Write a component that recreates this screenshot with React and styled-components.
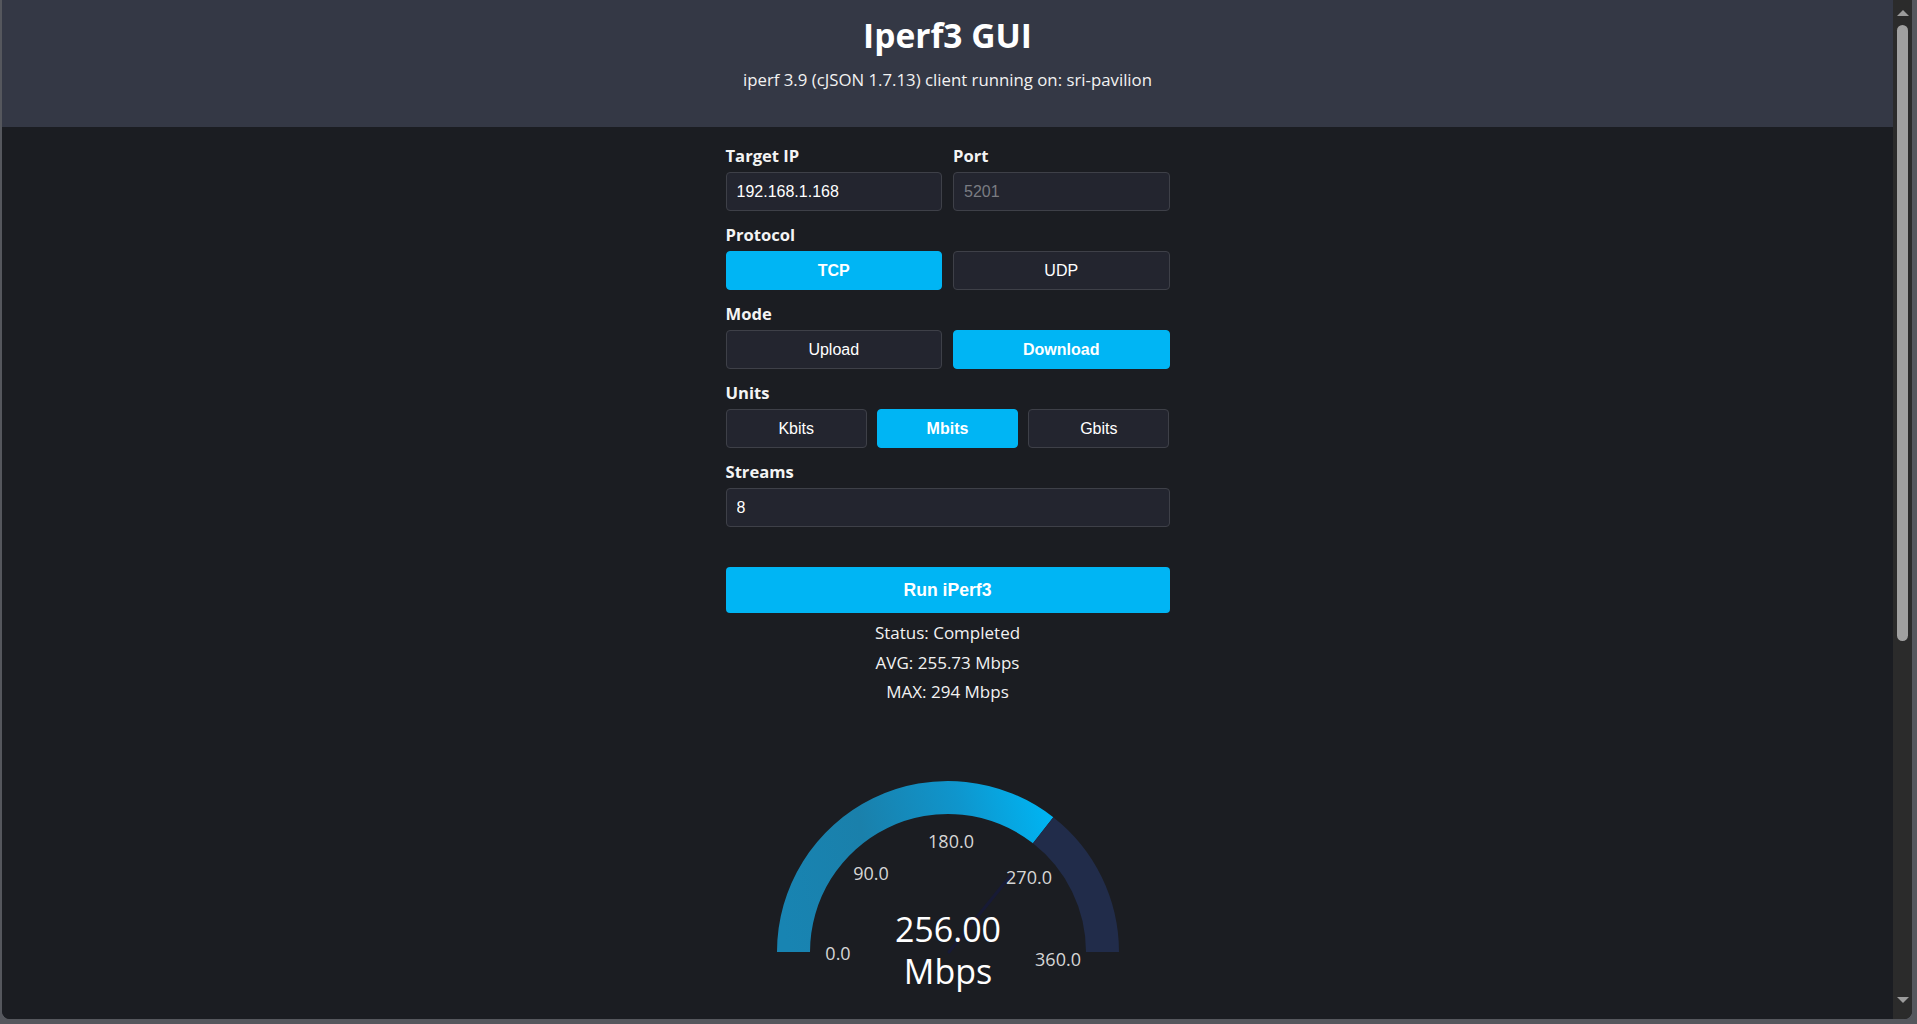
import React from "react";
import styled, { createGlobalStyle } from "styled-components";

const GlobalStyle = createGlobalStyle`
  html, body { margin: 0; padding: 0; height: 100%; overflow: hidden; }
  body { background: #5a5c62; font-family: "Open Sans", "Liberation Sans", sans-serif; }
  #root { height: 100%; }
  * { box-sizing: border-box; }
`;

const Frame = styled.div`
  height: 100vh;
  display: flex;
  padding: 0 5px 5px 2px;
  background: #55575d;
`;

const Window = styled.div`
  flex: 1;
  display: flex;
  border-radius: 0 0 8px 8px;
  overflow: hidden;
  background: #1b1d22;
`;

const Main = styled.main`
  flex: 1;
  overflow: hidden;
  display: flex;
  flex-direction: column;
  background: #1b1d22;
  color: #ffffff;
`;

const Header = styled.header`
  background: #343845;
  padding: 15px 0 36px;
  text-align: center;
`;

const Title = styled.h1`
  margin: 0;
  font-family: "Open Sans", sans-serif;
  font-weight: 700;
  font-size: 33.5px;
  line-height: 40px;
  color: #ffffff;
`;

const Subtitle = styled.p`
  margin: 14px 0 0;
  font-family: "Open Sans", sans-serif;
  font-size: 16.8px;
  line-height: 22px;
  color: #f2f2f2;
`;

const Form = styled.section`
  width: 444px;
  margin: 0 auto;
  padding-top: 19px;
  display: flex;
  flex-direction: column;
  gap: 14px;
`;

const Field = styled.div`
  display: flex;
  flex-direction: column;
  gap: 6px;
`;

const Label = styled.label`
  font-family: "Open Sans", sans-serif;
  font-weight: 700;
  font-size: 16.6px;
  line-height: 20px;
  color: #f4f4f4;
`;

const Row = styled.div`
  display: grid;
  grid-template-columns: repeat(${(p) => p.$cols}, 1fr);
  gap: ${(p) => (p.$cols === 3 ? "10px" : "11px")};
`;

const Input = styled.input`
  height: 39px;
  width: 100%;
  padding: 0 10px;
  background: #23252f;
  border: 1px solid #3e4048;
  border-radius: 4px;
  color: #ffffff;
  font-family: "Liberation Sans", Arial, sans-serif;
  font-size: 16px;
  outline: none;
  &::placeholder { color: #7a7c82; }
`;

const Toggle = styled.button`
  height: 39px;
  border-radius: 4px;
  border: 1px solid ${(p) => (p.$active ? "#00b5f4" : "#3e4048")};
  background: ${(p) => (p.$active ? "#00b5f4" : "#23252f")};
  color: #ffffff;
  font-family: "Liberation Sans", Arial, sans-serif;
  font-size: 16px;
  font-weight: ${(p) => (p.$active ? 700 : 400)};
  cursor: pointer;
`;

const RunButton = styled.button`
  margin-top: 26px;
  height: 46px;
  border: none;
  border-radius: 4px;
  background: #00b5f4;
  color: #ffffff;
  font-family: "Liberation Sans", Arial, sans-serif;
  font-size: 17.6px;
  font-weight: 700;
`;

const Results = styled.div`
  margin-top: -9px;
  text-align: center;
  font-family: "Open Sans", sans-serif;
  font-size: 17px;
  line-height: 29.5px;
  color: #f2f2f2;
`;

const GaugeWrap = styled.div`
  display: flex;
  justify-content: center;
  margin-top: 45px;
`;

const Scrollbar = styled.div`
  width: 19px;
  background: #2b2b2b;
  display: flex;
  flex-direction: column;
  align-items: center;
  padding: 10px 0 16px;
`;

const Arrow = styled.div`
  width: 0;
  height: 0;
  border-left: 6px solid transparent;
  border-right: 6px solid transparent;
  ${(p) => (p.$down ? "border-top: 6px solid #9c9c9c;" : "border-bottom: 6px solid #9c9c9c;")}
`;

const Thumb = styled.div`
  margin-top: 9px;
  width: 11px;
  height: 616px;
  border-radius: 6px;
  background: #a0a0a0;
`;

const Spacer = styled.div`
  flex: 1;
`;

function Gauge() {
  const tick = { fill: "#d6d6d6", fontSize: 18, fontFamily: "Open Sans, sans-serif", textAnchor: "middle", dominantBaseline: "central" };
  return (
    <svg width="400" height="270" viewBox="0 0 400 270">
      <defs>
        <linearGradient id="g" x1="29" y1="150" x2="305" y2="80" gradientUnits="userSpaceOnUse">
          <stop offset="0" stopColor="#1884b2" />
          <stop offset="0.35" stopColor="#1a80ab" />
          <stop offset="0.7" stopColor="#0f95cc" />
          <stop offset="1" stopColor="#00b4f2" />
        </linearGradient>
      </defs>
      <path d="M29 200 A171 171 0 0 1 305.28 65.25 L284.96 91.25 A138 138 0 0 0 62 200 Z" fill="url(#g)" />
      <path d="M305.28 65.25 A171 171 0 0 1 371 200 L338 200 A138 138 0 0 0 284.96 91.25 Z" fill="#212c4a" />
      <line x1="201" y1="200" x2="263" y2="123" stroke="#171a35" strokeWidth="3" strokeLinecap="round" />
      <text x="90" y="201" {...tick}>0.0</text>
      <text x="123" y="121" {...tick}>90.0</text>
      <text x="203" y="89" {...tick}>180.0</text>
      <text x="281" y="125" {...tick}>270.0</text>
      <text x="310" y="207" {...tick}>360.0</text>
      <text x="200" y="190" fill="#ffffff" fontSize="34" fontFamily="Open Sans, sans-serif" textAnchor="middle">256.00</text>
      <text x="200" y="232" fill="#ffffff" fontSize="34" fontFamily="Open Sans, sans-serif" textAnchor="middle">Mbps</text>
    </svg>
  );
}

export default function App() {
  return (
    <>
      <GlobalStyle />
      <Frame>
        <Window>
          <Main>
            <Header>
              <Title>Iperf3 GUI</Title>
              <Subtitle>iperf 3.9 (cJSON 1.7.13) client running on: sri-pavilion</Subtitle>
            </Header>
            <Form>
              <Row $cols={2}>
                <Field>
                  <Label>Target IP</Label>
                  <Input defaultValue="192.168.1.168" />
                </Field>
                <Field>
                  <Label>Port</Label>
                  <Input placeholder="5201" />
                </Field>
              </Row>
              <Field>
                <Label>Protocol</Label>
                <Row $cols={2}>
                  <Toggle $active>TCP</Toggle>
                  <Toggle>UDP</Toggle>
                </Row>
              </Field>
              <Field>
                <Label>Mode</Label>
                <Row $cols={2}>
                  <Toggle>Upload</Toggle>
                  <Toggle $active>Download</Toggle>
                </Row>
              </Field>
              <Field>
                <Label>Units</Label>
                <Row $cols={3}>
                  <Toggle>Kbits</Toggle>
                  <Toggle $active>Mbits</Toggle>
                  <Toggle>Gbits</Toggle>
                </Row>
              </Field>
              <Field>
                <Label>Streams</Label>
                <Input defaultValue="8" />
              </Field>
              <RunButton>Run iPerf3</RunButton>
              <Results>
                <div>Status: Completed</div>
                <div>AVG: 255.73 Mbps</div>
                <div>MAX: 294 Mbps</div>
              </Results>
            </Form>
            <GaugeWrap>
              <Gauge />
            </GaugeWrap>
          </Main>
          <Scrollbar>
            <Arrow />
            <Thumb />
            <Spacer />
            <Arrow $down />
          </Scrollbar>
        </Window>
      </Frame>
    </>
  );
}
